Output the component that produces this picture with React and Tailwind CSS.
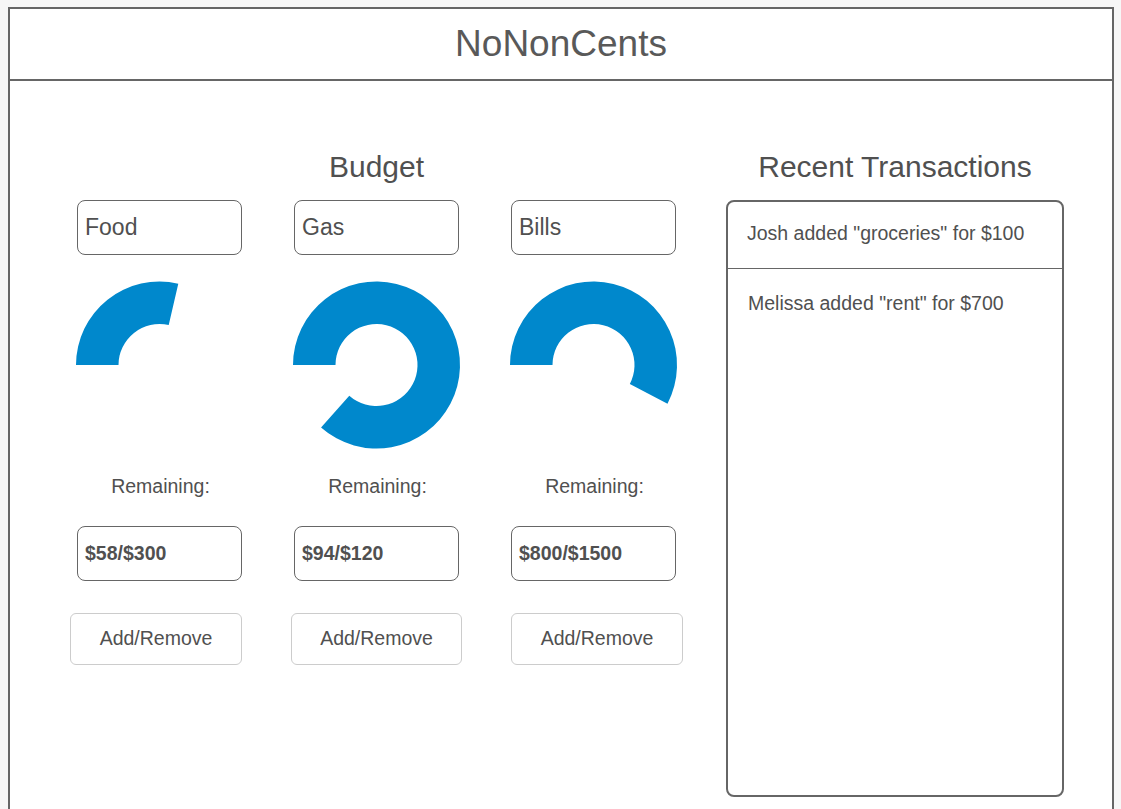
const BLUE = "#0088cc";

// angles are degrees clockwise from 12 o'clock
function ringArc(cx, cy, R, r, a0, a1) {
  const pt = (a, rad) => {
    const t = (a * Math.PI) / 180;
    return [cx + rad * Math.sin(t), cy - rad * Math.cos(t)];
  };
  const large = a1 - a0 > 180 ? 1 : 0;
  const [x0, y0] = pt(a0, R);
  const [x1, y1] = pt(a1, R);
  const [x2, y2] = pt(a1, r);
  const [x3, y3] = pt(a0, r);
  return `M${x0} ${y0} A${R} ${R} 0 ${large} 1 ${x1} ${y1} L${x2} ${y2} A${r} ${r} 0 ${large} 0 ${x3} ${y3} Z`;
}

const budgets = [
  { name: "Food", value: "$58/$300", end: 13, btn: "w-[172px] -ml-[7px]" },
  { name: "Gas", value: "$94/$120", end: 221.6, btn: "w-[171px] -ml-[3px]" },
  { name: "Bills", value: "$800/$1500", end: 117.6, btn: "w-[172px] ml-0" },
];

function BudgetColumn({ item }) {
  return (
    <div className="flex w-[165px] flex-col">
      {/* category name */}
      <div className="flex h-[55px] items-center rounded-lg border border-[#666] px-[7px] text-[23px] text-[#505050]">
        {item.name}
      </div>

      {/* usage ring */}
      <svg className="mt-[26px] overflow-visible" width="165" height="168" viewBox="0 0 165 168">
        <path d={ringArc(82.5, 84, 83.5, 41, -90, item.end)} fill={BLUE} />
      </svg>

      <p className="mt-[26px] pl-[2px] text-center text-[19.5px] leading-[22px] text-[#505050]">Remaining:</p>

      <div className="mt-[29px] flex h-[55px] items-center rounded-lg border border-[#666] px-[7px] text-[19.5px] font-bold text-[#505050]">
        {item.value}
      </div>

      <button
        className={`mt-[32px] h-[52px] rounded-md border border-[#ccc] bg-white text-[19.5px] text-[#505050] ${item.btn}`}
      >
        Add/Remove
      </button>
    </div>
  );
}

export default function App() {
  return (
    <div
      className="h-screen overflow-hidden bg-[#f7f7f7] pl-[8px] pt-[7px]"
      style={{ fontFamily: '"Liberation Sans", Arial, sans-serif' }}
    >
      <div className="h-[820px] w-[1106px] border-2 border-[#666] bg-white">
        {/* Header */}
        <div className="flex h-[72px] items-center justify-center border-b-2 border-[#666] text-[37px] text-[#595959]">
          NoNonCents
        </div>

        <div className="flex gap-[50px] pl-[67px] pt-[68px]">
          {/* Budget */}
          <div className="flex w-[599px] flex-col">
            <h2 className="text-center text-[30px] leading-[36px] text-[#505050]">Budget</h2>
            <div className="mt-[15px] flex gap-[52px]">
              {budgets.map((b) => (
                <BudgetColumn key={b.name} item={b} />
              ))}
            </div>
          </div>

          {/* Recent transactions */}
          <div className="flex w-[338px] flex-col">
            <h2 className="text-center text-[30px] leading-[36px] text-[#505050]">Recent Transactions</h2>
            <div className="mt-[15px] h-[597px] rounded-lg border-2 border-[#666]">
              <div className="flex h-[67px] items-center border-b border-[#666] pb-[3px] pl-[19px] text-[19.5px] text-[#505050]">
                Josh added "groceries" for $100
              </div>
              <div className="flex h-[70px] items-center pl-[20px] text-[19.5px] text-[#505050]">
                Melissa added "rent" for $700
              </div>
            </div>
          </div>
        </div>
      </div>
    </div>
  );
}
